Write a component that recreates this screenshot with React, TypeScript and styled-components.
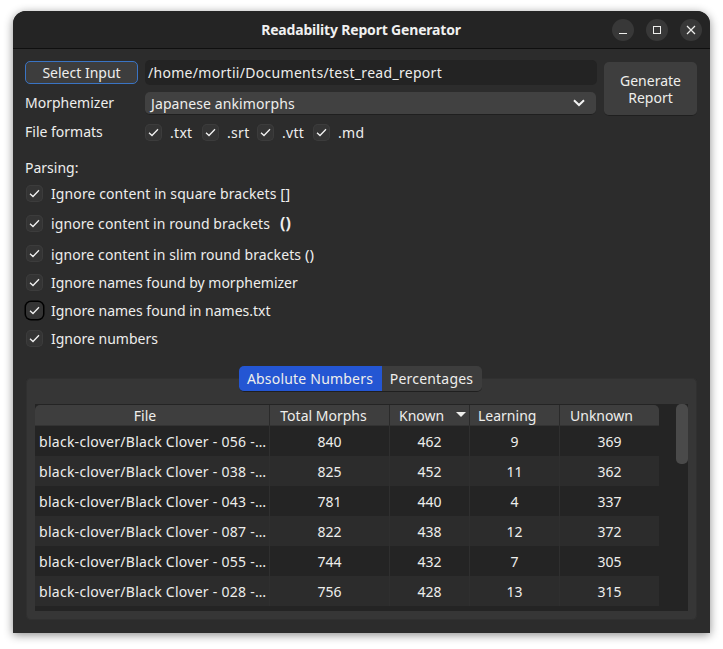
import styled, { createGlobalStyle } from 'styled-components';

const GlobalStyle = createGlobalStyle`
  html, body {
    margin: 0;
    padding: 0;
    background: #ffffff;
  }
  body {
    font-family: "Noto Sans", "Liberation Sans", sans-serif;
    font-size: 14px;
    color: #eeeeec;
  }
`;

const Page = styled.div`
  width: 723px;
  height: 649px;
  padding: 11px 13px 16px;
  box-sizing: border-box;
  overflow: hidden;
`;

const Window = styled.div`
  width: 697px;
  height: 622px;
  display: flex;
  flex-direction: column;
  background: #2c2c2c;
  border-radius: 13px 13px 0 0;
  box-shadow: 0 2px 10px rgba(0, 0, 0, 0.45);
  overflow: hidden;
`;

const TitleBar = styled.header`
  height: 37px;
  flex: none;
  display: flex;
  align-items: center;
  justify-content: flex-end;
  position: relative;
  padding-right: 8px;
  gap: 12px;
  background: #242424;
  border-bottom: 1px solid #0f0f0f;
`;

const Title = styled.h1`
  position: absolute;
  left: 0;
  right: 0;
  margin: 0;
  padding-right: 1px;
  text-align: center;
  font-size: 14px;
  font-weight: 700;
  letter-spacing: -0.18px;
  color: #f0f0f0;
`;

const WinButton = styled.button`
  width: 22px;
  height: 22px;
  padding: 0;
  border: 0;
  border-radius: 50%;
  background: #383838;
  display: flex;
  align-items: center;
  justify-content: center;
  position: relative;
  svg {
    display: block;
  }
`;

const Content = styled.main`
  flex: 1;
  display: flex;
  flex-direction: column;
  padding: 11px 13px 13px 12px;
  min-height: 0;
`;

const TopArea = styled.section`
  display: flex;
  gap: 7px;
`;

const FormGrid = styled.div`
  width: 572px;
  display: grid;
  grid-template-columns: 113px 1fr;
  column-gap: 7px;
`;

const SelectButton = styled.button`
  height: 23px;
  margin-top: 1px;
  padding: 0;
  font: inherit;
  color: #eeeeec;
  background: #3d3d3d;
  border: 1px solid #3a74c4;
  border-radius: 5px;
`;

const PathInput = styled.div`
  height: 25px;
  padding-left: 3px;
  display: flex;
  align-items: center;
  background: #232323;
  border-radius: 5px;
  font-size: 14px;
  letter-spacing: 0.3px;
`;

const RowLabel = styled.label<{ $top: number }>`
  display: flex;
  align-items: center;
  height: 22px;
  padding-bottom: 2px;
  box-sizing: border-box;
  margin-top: ${(p) => p.$top}px;
`;

const Combo = styled.div`
  height: 23px;
  width: 451px;
  margin-top: 7px;
  padding: 0 11px 0 6px;
  box-sizing: border-box;
  display: flex;
  align-items: center;
  justify-content: space-between;
  background: #414141;
  border-bottom: 1px solid #1f1f1f;
  border-radius: 5px;
  letter-spacing: 0.1px;
`;

const Formats = styled.div`
  display: flex;
  align-items: center;
  height: 22px;
  margin-top: 6px;
`;

const Format = styled.label<{ $width: number }>`
  width: ${(p) => p.$width}px;
  display: flex;
  align-items: center;
  gap: 8px;
  letter-spacing: 0.3px;
`;

const GenerateButton = styled.button`
  width: 93px;
  height: 54px;
  margin-top: 2px;
  padding: 0;
  font: inherit;
  line-height: 17px;
  color: #eeeeec;
  background: #3e3e3e;
  border: 0;
  border-bottom: 1px solid #1f1f1f;
  border-radius: 5px;
`;

const ParsingLabel = styled.div`
  margin-top: 15px;
  line-height: 20px;
`;

const OptionList = styled.div`
  padding-left: 1px;
  display: flex;
  flex-direction: column;
`;

const Option = styled.label<{ $height: number; $wide?: boolean }>`
  height: ${(p) => p.$height}px;
  display: flex;
  align-items: center;
  gap: 8px;
  letter-spacing: ${(p) => (p.$wide ? 0.1 : 0)}px;
`;

const Brackets = styled.span`
  font-size: 15px;
`;

const BoldBrackets = styled.span`
  margin-left: 10px;
  font-size: 16px;
  font-weight: 700;
`;

const CheckBox = styled.span<{ $focused?: boolean }>`
  width: 17px;
  height: 17px;
  flex: none;
  display: flex;
  align-items: center;
  justify-content: center;
  background: #343434;
  border-radius: 5px;
  box-shadow: ${(p) =>
    p.$focused ? '0 0 0 1.5px #000000' : 'inset 0 0 0 1px #3c3c3c'};
`;

const Tabs = styled.div`
  margin: 14px 0 0 0;
  padding-right: 2px;
  height: 26px;
  display: flex;
  justify-content: center;
  flex: none;
  position: relative;
  z-index: 1;
`;

const Tab = styled.div<{ $active?: boolean; $side: 'left' | 'right' }>`
  width: ${(p) => (p.$active ? 143 : 100)}px;
  height: 26px;
  display: flex;
  align-items: center;
  justify-content: center;
  box-sizing: border-box;
  background: ${(p) => (p.$active ? '#2456d3' : '#3d3d3d')};
  border-bottom: 1px solid #1f1f1f;
  border-radius: ${(p) => (p.$side === 'left' ? '5px 0 0 5px' : '0 5px 5px 0')};
  letter-spacing: 0.2px;
`;

const Pane = styled.section`
  margin-top: -14px;
  margin-left: 1px;
  flex: 1;
  min-height: 0;
  padding: 26px 9px 9px;
  background: #363636;
  border-radius: 5px;
  box-shadow: inset 0 0 0 1px #303030;
`;

const TableArea = styled.div`
  position: relative;
  height: 207px;
  background: #242424;
  overflow: hidden;
`;

const Row = styled.div<{ $alt?: boolean; $header?: boolean }>`
  width: 624px;
  display: grid;
  grid-template-columns: 235px 120px 80px 90px 99px;
  height: ${(p) => (p.$header ? 22 : 30)}px;
  background: ${(p) => (p.$alt ? '#2c2c2c' : '#242424')};
`;

const HeaderCell = styled.div<{ $left?: number; $right?: number }>`
  position: relative;
  display: flex;
  align-items: center;
  justify-content: ${(p) => (p.$left ? 'flex-start' : 'center')};
  padding-left: ${(p) => p.$left ?? 0}px;
  padding-right: ${(p) => p.$right ?? 0}px;
  margin-top: 1px;
  background: #3e3e3e;
  border-right: 1px solid #2a2a2a;
  border-bottom: 1px solid #333333;
  box-sizing: border-box;
  &:first-child {
    border-top-left-radius: 5px;
  }
  &:last-child {
    border-top-right-radius: 5px;
    border-right: 0;
  }
`;

const SortArrow = styled.span`
  position: absolute;
  right: 3px;
  top: 7px;
  width: 0;
  height: 0;
  border-left: 5px solid transparent;
  border-right: 5px solid transparent;
  border-top: 5px solid #eeeeec;
`;

const Cell = styled.div<{ $file?: boolean }>`
  display: flex;
  align-items: center;
  justify-content: ${(p) => (p.$file ? 'flex-start' : 'center')};
  padding-left: ${(p) => (p.$file ? 4 : 0)}px;
  border-right: 1px solid #2f2f2f;
  white-space: nowrap;
  overflow: hidden;
  letter-spacing: ${(p) => (p.$file ? 0.27 : 0)}px;
  &:last-child {
    border-right: 0;
  }
`;

const Scrollbar = styled.div`
  position: absolute;
  right: 0;
  top: 0;
  width: 12px;
  height: 60px;
  background: #4a4a4a;
  border-radius: 5px;
`;

const Check = () => (
  <svg width="11" height="9" viewBox="0 0 11 9" fill="none">
    <path d="M1 4.7 L4 7.5 L10 1.2" stroke="#f2f2f2" strokeWidth="1.3" />
  </svg>
);

const formats = [
  { label: '.txt', width: 57 },
  { label: '.srt', width: 55 },
  { label: '.vtt', width: 56 },
  { label: '.md', width: 60 },
];

const rows = [
  ['056', '840', '462', '9', '369'],
  ['038', '825', '452', '11', '362'],
  ['043', '781', '440', '4', '337'],
  ['087', '822', '438', '12', '372'],
  ['055', '744', '432', '7', '305'],
  ['028', '756', '428', '13', '315'],
];

export default function App() {
  return (
    <Page>
      <GlobalStyle />
      <Window>
        <TitleBar>
          <Title>Readability Report Generator</Title>
          <WinButton aria-label="Minimize">
            <svg width="10" height="10" viewBox="0 0 10 10">
              <rect x="1" y="8" width="8" height="1" fill="#eeeeec" />
            </svg>
          </WinButton>
          <WinButton aria-label="Maximize">
            <svg width="10" height="10" viewBox="0 0 10 10" fill="none">
              <rect x="1.5" y="1.5" width="7" height="7" stroke="#eeeeec" />
            </svg>
          </WinButton>
          <WinButton aria-label="Close">
            <svg width="10" height="10" viewBox="0 0 10 10" fill="none">
              <path d="M1 1 L9 9 M9 1 L1 9" stroke="#eeeeec" strokeWidth="1.2" />
            </svg>
          </WinButton>
        </TitleBar>
        <Content>
          <TopArea>
            <FormGrid>
              <SelectButton>Select Input</SelectButton>
              <PathInput>/home/mortii/Documents/test_read_report</PathInput>
              <RowLabel $top={7}>Morphemizer</RowLabel>
              <Combo>
                Japanese ankimorphs
                <svg width="12" height="8" viewBox="0 0 12 8" fill="none">
                  <path d="M1 1.2 L6 6 L11 1.2" stroke="#f2f2f2" strokeWidth="2" />
                </svg>
              </Combo>
              <RowLabel $top={6}>File formats</RowLabel>
              <Formats>
                {formats.map((f) => (
                  <Format key={f.label} $width={f.width}>
                    <CheckBox>
                      <Check />
                    </CheckBox>
                    {f.label}
                  </Format>
                ))}
              </Formats>
            </FormGrid>
            <GenerateButton>
              Generate
              <br />
              Report
            </GenerateButton>
          </TopArea>
          <ParsingLabel>Parsing:</ParsingLabel>
          <OptionList>
            <Option $height={30} $wide>
              <CheckBox><Check /></CheckBox>
              <span>Ignore content in square brackets <Brackets>[]</Brackets></span>
            </Option>
            <Option $height={30} $wide>
              <CheckBox><Check /></CheckBox>
              <span>ignore content in round brackets<BoldBrackets>()</BoldBrackets></span>
            </Option>
            <Option $height={31} $wide>
              <CheckBox><Check /></CheckBox>
              <span>ignore content in slim round brackets <Brackets>()</Brackets></span>
            </Option>
            <Option $height={27}>
              <CheckBox><Check /></CheckBox>
              Ignore names found by morphemizer
            </Option>
            <Option $height={28}>
              <CheckBox $focused><Check /></CheckBox>
              Ignore names found in names.txt
            </Option>
            <Option $height={28}>
              <CheckBox><Check /></CheckBox>
              Ignore numbers
            </Option>
          </OptionList>
          <Tabs>
            <Tab $active $side="left">Absolute Numbers</Tab>
            <Tab $side="right">Percentages</Tab>
          </Tabs>
          <Pane>
            <TableArea>
              <Row $header>
                <HeaderCell $right={14}>File</HeaderCell>
                <HeaderCell $right={12}>Total Morphs</HeaderCell>
                <HeaderCell $left={9}>
                  Known
                  <SortArrow />
                </HeaderCell>
                <HeaderCell $left={8}>Learning</HeaderCell>
                <HeaderCell $left={10}>Unknown</HeaderCell>
              </Row>
              {rows.map((r, i) => (
                <Row key={r[0]} $alt={i % 2 === 1}>
                  <Cell $file>{`black-clover/Black Clover - ${r[0]} -…`}</Cell>
                  <Cell>{r[1]}</Cell>
                  <Cell>{r[2]}</Cell>
                  <Cell>{r[3]}</Cell>
                  <Cell>{r[4]}</Cell>
                </Row>
              ))}
              <Scrollbar />
            </TableArea>
          </Pane>
        </Content>
      </Window>
    </Page>
  );
}
